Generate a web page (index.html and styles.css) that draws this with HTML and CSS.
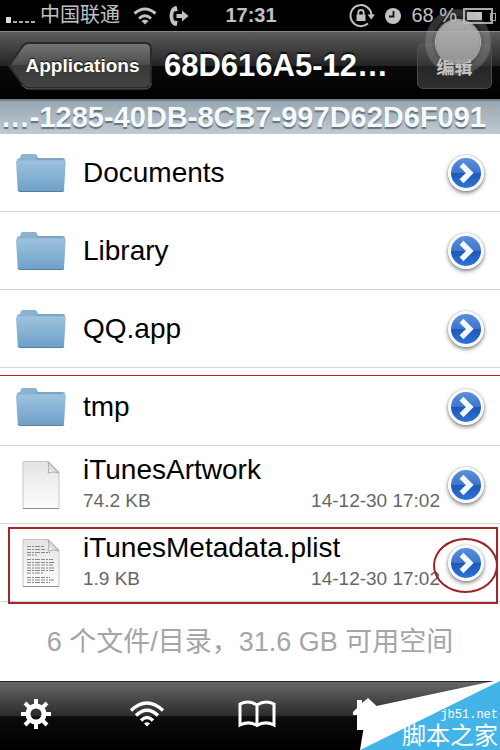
FILE: index.html
```
<!DOCTYPE html>
<html lang="zh-CN">

<head>
    <meta charset="UTF-8">
    <meta name="viewport" content="width=device-width, initial-scale=1.0">
    <title>68D616A5-1285-40DB-8CB7-997D62D6F091</title>
    <link rel="stylesheet" href="styles.css">
</head>

<body>
    <!-- shared icons -->
    <svg class="sprite" aria-hidden="true">
        <defs>
            <linearGradient id="folderFill" x1="0" y1="0" x2="0" y2="1">
                <stop offset="0" stop-color="#9cc3de" />
                <stop offset="1" stop-color="#6fa0c8" />
            </linearGradient>
            <linearGradient id="pageFill" x1="0" y1="0" x2="0" y2="1">
                <stop offset="0" stop-color="#e4e4e4" />
                <stop offset="1" stop-color="#fdfdfd" />
            </linearGradient>
            <linearGradient id="foldFill" x1="0" y1="1" x2="1" y2="0">
                <stop offset="0" stop-color="#ffffff" />
                <stop offset="1" stop-color="#a8a8a8" />
            </linearGradient>
        </defs>
        <symbol id="folder" viewBox="0 0 50 40">
            <path d="M1 6 L4 5 L5 2 Q5.500 1 7 1 H19 Q20.500 1 21 2.500 L22 5 H47 Q49 5 49 7 V10 H1Z" fill="#8bb2cf" />
            <path d="M0 9 Q0 7.500 2 7.500 H48 Q50 7.500 49.700 9.500 L48 37 Q48 38.500 46 38.500 H3.500 Q2 38.500 1.800 37Z" fill="url(#folderFill)" />
            <path d="M2 37.500 Q2.500 38.500 4 38.500 H46 Q48 38.500 48 37.500" fill="none" stroke="#557f9f" />
            <path d="M20 6 H47" stroke="#6d97b6" />
        </symbol>
        <symbol id="page" viewBox="0 0 40 50">
            <path d="M2 1.500 H27 L38 12 V48.500 H2Z" fill="url(#pageFill)" stroke="#c6c6c6" />
            <path d="M2 48.500 H38" stroke="#8f8f8f" />
            <path d="M27 1.500 Q29 7 27 13 Q33 11 38 13 Z" fill="url(#foldFill)" stroke="#ababab" />
        </symbol>
        <symbol id="chevron" viewBox="0 0 20 20">
            <path d="M7 4.500 L12.500 10 L7 15.500" fill="none" stroke="#f1faff" stroke-width="3.600" />
        </symbol>
        <symbol id="wifi" viewBox="0 0 36 26">
            <g fill="none" stroke="currentColor" stroke-width="3.400">
                <path d="M2 9.500 Q18 -5.500 34 9.500" />
                <path d="M7 14.500 Q18 4 29 14.500" />
                <path d="M12 19.500 Q18 13.500 24 19.500" />
            </g>
            <path d="M15 22.500 Q18 20 21 22.500 L18 25.500Z" fill="currentColor" />
        </symbol>
    </svg>

    <header class="status-bar">
        <div class="status-side">
            <span class="signal"><i class="bar-on"></i><i></i><i></i><i></i><i></i></span>
            <span class="carrier">中国联通</span>
            <svg class="status-wifi" viewBox="0 0 24 18">
                <g fill="none" stroke="currentColor" stroke-width="3">
                    <path d="M1.500 6.500 Q12 -2.500 22.500 6.500" />
                    <path d="M6 11.500 Q12 6 18 11.500" />
                </g>
                <path d="M8.500 14 Q12 11.500 15.500 14 L12 17.500Z" fill="currentColor" />
            </svg>
            <svg class="status-call" viewBox="0 0 20 20" fill="currentColor">
                <path d="M7.500 0 Q8.500 2.500 8.500 5 L5 5.500 Q3.500 10 5 14.500 L8.500 15 Q8.500 17.500 7.500 20 Q4 20 2 16.500 Q-1 10 2 3.500 Q4 0 7.500 0Z" />
                <path d="M7.500 8 H13 V4.500 L19.500 10 L13 15.500 V12 H7.500Z" />
            </svg>
        </div>
        <time class="clock">17:31</time>
        <div class="status-side status-right">
            <svg class="status-lock" viewBox="0 0 26 24">
                <path d="M19 19.500 A10.500 10.500 0 1 1 22.500 11" fill="none" stroke="currentColor" stroke-width="2" />
                <path d="M18.500 10.500 H26 L22.200 15.500Z M7.500 10.500 H16.500 V17 H7.500Z" fill="currentColor" />
                <path d="M9.300 11 V8.500 Q9.300 6 12 6 Q14.700 6 14.700 8.500 V11" fill="none" stroke="currentColor" stroke-width="1.800" />
            </svg>
            <svg class="status-alarm" viewBox="0 0 16 16">
                <circle cx="8" cy="8" r="8" fill="currentColor" />
                <path d="M8.500 3 V8.500 H4" fill="none" stroke="#111" stroke-width="1.800" />
            </svg>
            <span class="percent">68 %</span>
            <span class="battery"><i></i></span>
        </div>
    </header>

    <nav class="nav-bar">
        <button class="back-button" type="button">
            <svg class="back-shape" viewBox="0 0 144 48" preserveAspectRatio="none" aria-hidden="true">
                <defs>
                    <linearGradient id="backFill" x1="0" y1="0" x2="0" y2="1">
                        <stop offset="0" stop-color="#777" />
                        <stop offset="0.490" stop-color="#4b4b4b" />
                        <stop offset="0.500" stop-color="#3a3a3a" />
                        <stop offset="1" stop-color="#434343" />
                    </linearGradient>
                </defs>
                <path d="M1 24 L14 5 Q17 1 21 1 H137 Q143 1 143 7 V40 Q143 46 137 46 H21 Q17 46 14 42Z" fill="url(#backFill)" stroke="#292929" stroke-width="2" />
                <path d="M14 43 Q17 47 21 47 H137 Q143 47 143 41" fill="none" stroke="#5d5d5d" />
            </svg>
            <span>Applications</span>
        </button>
        <h1 class="nav-title">68D616A5-12…</h1>
        <button class="edit-button" type="button">编辑</button>
        <div class="assistive-touch"></div>
    </nav>

    <div class="path-bar">…-1285-40DB-8CB7-997D62D6F091</div>

    <main>
        <ul class="file-list">
            <li class="file-row">
                <svg class="file-icon folder"><use href="#folder" /></svg>
                <div class="file-text"><span class="file-name">Documents</span></div>
                <button class="detail" type="button" aria-label="Documents"><svg><use href="#chevron" /></svg></button>
            </li>
            <li class="file-row">
                <svg class="file-icon folder"><use href="#folder" /></svg>
                <div class="file-text"><span class="file-name">Library</span></div>
                <button class="detail" type="button" aria-label="Library"><svg><use href="#chevron" /></svg></button>
            </li>
            <li class="file-row">
                <svg class="file-icon folder"><use href="#folder" /></svg>
                <div class="file-text"><span class="file-name">QQ.app</span></div>
                <button class="detail" type="button" aria-label="QQ.app"><svg><use href="#chevron" /></svg></button>
            </li>
            <li class="file-row ruled">
                <svg class="file-icon folder"><use href="#folder" /></svg>
                <div class="file-text"><span class="file-name">tmp</span></div>
                <button class="detail" type="button" aria-label="tmp"><svg><use href="#chevron" /></svg></button>
            </li>
            <li class="file-row">
                <svg class="file-icon page"><use href="#page" /></svg>
                <div class="file-text">
                    <span class="file-name">iTunesArtwork</span>
                    <div class="file-meta"><span>74.2 KB</span><time>14-12-30 17:02</time></div>
                </div>
                <button class="detail" type="button" aria-label="iTunesArtwork"><svg><use href="#chevron" /></svg></button>
            </li>
            <li class="file-row marked">
                <svg class="file-icon page" viewBox="0 0 40 50">
                    <use href="#page" />
                    <g stroke="#888" stroke-width="1" stroke-dasharray="4 1 2 1 5 1">
                        <path d="M6 8.500 H23 M6 11.500 H25 M6 14.500 H29 M6 17 H16" />
                        <path d="M6 21.500 H32 M6 24.500 H34 M6 27 H32 M6 30 H34 M6 32.500 H33 M6 35 H22" />
                        <path d="M6 39.500 H29 M6 42 H34 M6 44.500 H29" />
                    </g>
                </svg>
                <div class="file-text">
                    <span class="file-name">iTunesMetadata.plist</span>
                    <div class="file-meta"><span>1.9 KB</span><time>14-12-30 17:02</time></div>
                </div>
                <button class="detail circled" type="button" aria-label="iTunesMetadata.plist"><svg><use href="#chevron" /></svg></button>
            </li>
        </ul>
        <p class="summary">6 个文件/目录，31.6 GB 可用空间</p>
    </main>

    <footer class="tab-bar">
        <button class="tab" type="button" aria-label="设置">
            <svg viewBox="0 0 32 32">
                <circle cx="16" cy="16" r="8" fill="none" stroke="currentColor" stroke-width="5" />
                <path d="M16 1 V8 M16 24 V31 M1 16 H8 M24 16 H31 M5 5 L10 10 M22 22 L27 27 M5 27 L10 22 M22 10 L27 5" stroke="currentColor" stroke-width="4" />
            </svg>
        </button>
        <button class="tab" type="button" aria-label="Wi-Fi">
            <svg class="tab-wifi"><use href="#wifi" /></svg>
        </button>
        <button class="tab" type="button" aria-label="书签">
            <svg class="tab-book" viewBox="0 0 38 28">
                <path d="M19 5 Q11 -0.500 2 4 V25 Q11 20.500 19 25.500 Q27 20.500 36 25 V4 Q27 -0.500 19 5 V25" fill="none" stroke="currentColor" stroke-width="3" />
            </svg>
        </button>
        <button class="tab" type="button" aria-label="主目录">
            <svg viewBox="0 0 32 32">
                <path d="M1 17 V14 L5 10 V2 H10 V5 L16 0 L31 14 V17 H27 V32 H19 V22 H13 V32 H5 V17Z" fill="currentColor" />
            </svg>
        </button>
        <div class="watermark">
            <svg viewBox="0 0 140 69" aria-hidden="true">
                <path d="M134 0 L7 27 L0 69 H140 V0Z" fill="#fff" />
                <path d="M140 0 V69 H0Z" fill="#43b4e8" />
            </svg>
            <span class="watermark-url">jb51.net</span>
            <span class="watermark-name">脚本之家</span>
        </div>
    </footer>
</body>

</html>
```
FILE: styles.css
```
* {
    box-sizing: border-box;
}

body {
    margin: 0;
    min-height: 100vh;
    display: flex;
    flex-direction: column;
    overflow-x: hidden;
    background-color: #fff;
    color: #000;
    font-family: "Liberation Sans", Arial, "Noto Sans CJK SC", sans-serif;
}

button {
    padding: 0;
    border: 0;
    background: none;
    color: #fff;
    font-family: inherit;
    cursor: pointer;
}

svg {
    display: block;
}

.sprite {
    position: absolute;
    width: 0;
    height: 0;
}

/* status bar */
.status-bar {
    display: flex;
    align-items: center;
    height: 31px;
    padding: 0 4px 0 6px;
    background-color: #000;
    color: #c2c2c2;
    font-size: 20px;
    line-height: 31px;
}

.status-side {
    flex: 1;
    display: flex;
    align-items: center;
    white-space: nowrap;
}

.status-right {
    justify-content: flex-end;
    gap: 6px;
}

.signal {
    display: flex;
    align-items: flex-end;
    gap: 2px;
    height: 6px;
    margin: 8px 5px 0 0;
}

.signal i {
    width: 4px;
    height: 2px;
    background-color: #aaa;
}

.signal .bar-on {
    width: 5px;
    height: 6px;
    background-color: #ddd;
}

.status-wifi {
    width: 24px;
    height: 18px;
    margin-left: 13px;
}

.status-call {
    width: 20px;
    height: 20px;
    margin-left: 12px;
}

.clock {
    font-weight: bold;
}

.status-lock {
    width: 26px;
    height: 24px;
}

.status-alarm {
    width: 16px;
    height: 16px;
    margin: 0 4px;
}

.battery {
    position: relative;
    width: 30px;
    height: 16px;
    padding: 2px;
    border: 2px solid #aaa;
    margin-right: 3px;
}

.battery::after {
    content: "";
    position: absolute;
    top: 3px;
    right: -5px;
    width: 4px;
    height: 6px;
    border: 1px solid #aaa;
}

.battery i {
    display: block;
    width: 68%;
    height: 100%;
    background-color: #c2c2c2;
}

/* navigation */
.nav-bar {
    position: relative;
    display: flex;
    align-items: center;
    height: 68px;
    padding: 0 8px;
    border-top: 1px solid #888;
    background: linear-gradient(#5c5c5c, #242424 50%, #0a0a0a 51%, #000);
}

.back-button {
    position: relative;
    width: 144px;
    height: 48px;
    padding-left: 5px;
    font-size: 19px;
    font-weight: bold;
    text-shadow: 0 -1px 1px #111;
}

.back-shape {
    position: absolute;
    top: 0;
    left: 0;
    width: 100%;
    height: 100%;
}

.back-button span {
    position: relative;
}

.nav-title {
    flex: 1;
    margin: 0;
    padding-left: 12px;
    color: #fff;
    font-size: 31px;
    line-height: 40px;
    text-shadow: 0 -2px 1px #111;
    white-space: nowrap;
}

.edit-button {
    width: 75px;
    height: 47px;
    border: 1px solid #4a4a4a;
    border-radius: 6px;
    background: linear-gradient(#555, #333 50%, #262626 51%, #303030);
    color: #ccc;
    font-size: 18px;
    font-weight: bold;
    white-space: nowrap;
}

/* floating touch button sits over the status and navigation bars */
.assistive-touch {
    position: absolute;
    top: -23px;
    right: 9px;
    width: 66px;
    height: 66px;
    border: 7px solid rgba(190, 190, 190, 0.1);
    border-radius: 50%;
    background-color: rgba(170, 170, 170, 0.2);
}

.assistive-touch::after {
    content: "";
    position: absolute;
    inset: 4px;
    border-radius: 50%;
    background: linear-gradient(#bbb, #999);
    box-shadow: 0 0 1px 1px #ccc;
    opacity: 0.9;
}

.path-bar {
    height: 35px;
    padding-right: 14px;
    border-top: 2px solid #74818b;
    background: linear-gradient(#98a7b2, #c0cad1);
    color: #f4fbff;
    font-size: 29px;
    font-weight: bold;
    line-height: 33px;
    text-align: right;
    text-shadow: 0 2px 1px #66727b;
    white-space: nowrap;
}

/* files */
main {
    flex: 1;
}

.file-list {
    margin: 0;
    padding: 0;
    list-style: none;
}

.file-row {
    position: relative;
    display: grid;
    grid-template-columns: 50px 1fr 36px;
    align-items: center;
    height: 78px;
    padding: 0 16px;
    border-bottom: 1px solid #d3d3d3;
}

.file-icon {
    justify-self: center;
}

.folder {
    width: 50px;
    height: 40px;
}

.page {
    width: 40px;
    height: 50px;
}

.file-text {
    padding: 0 8px 0 17px;
    white-space: nowrap;
}

.file-name {
    display: block;
    font-size: 28px;
    line-height: 32px;
}

.file-meta {
    display: flex;
    justify-content: space-between;
    color: #666;
    font-size: 19px;
    line-height: 30px;
}

.detail {
    position: relative;
    width: 36px;
    height: 36px;
    border: 3px solid #f7fafc;
    border-radius: 50%;
    background: linear-gradient(#5c8fdc, #3e74cb 50%, #1e57b8 51%, #2f73d8);
    box-shadow: 0 2px 4px rgba(0, 0, 0, 0.5), 0 0 1px #777;
}

.detail svg {
    width: 30px;
    height: 30px;
}

/* red annotations */
.ruled::before {
    content: "";
    position: absolute;
    top: 7px;
    left: 0;
    right: 0;
    height: 1px;
    background-color: #c81c10;
}

.marked::before {
    content: "";
    position: absolute;
    top: 3px;
    bottom: -3px;
    left: 8px;
    right: 2px;
    border: 2px solid #a5262a;
}

.circled::after {
    content: "";
    position: absolute;
    top: -10px;
    left: -18px;
    width: 61px;
    height: 51px;
    border: 2px solid #9c2226;
    border-radius: 50%;
}

.summary {
    margin: 0;
    padding: 20px 0 18px;
    color: #a5a5a5;
    font-size: 27px;
    line-height: 40px;
    text-align: center;
}

/* bottom toolbar */
.tab-bar {
    position: relative;
    display: flex;
    align-items: center;
    justify-content: space-between;
    height: 69px;
    padding: 0 22% 4px 14px;
    border-top: 1px solid #222;
    background: linear-gradient(#666, #2b2b2b 50%, #0c0c0c 51%, #000);
}

.tab {
    display: flex;
    justify-content: center;
    width: 44px;
}

.tab svg {
    width: 32px;
    height: 32px;
}

.tab .tab-wifi {
    width: 36px;
    height: 26px;
}

.tab .tab-book {
    width: 38px;
    height: 28px;
}

.watermark {
    position: absolute;
    right: 0;
    bottom: 0;
    display: flex;
    flex-direction: column;
    align-items: flex-end;
    justify-content: flex-end;
    width: 140px;
    height: 69px;
    padding-right: 2px;
    color: #fff;
    white-space: nowrap;
}

.watermark svg {
    position: absolute;
    inset: 0;
}

.watermark-url {
    position: relative;
    font-family: "Liberation Mono", monospace;
    font-size: 12px;
    line-height: 14px;
}

.watermark-name {
    position: relative;
    font-size: 24px;
    line-height: 28px;
}
```
